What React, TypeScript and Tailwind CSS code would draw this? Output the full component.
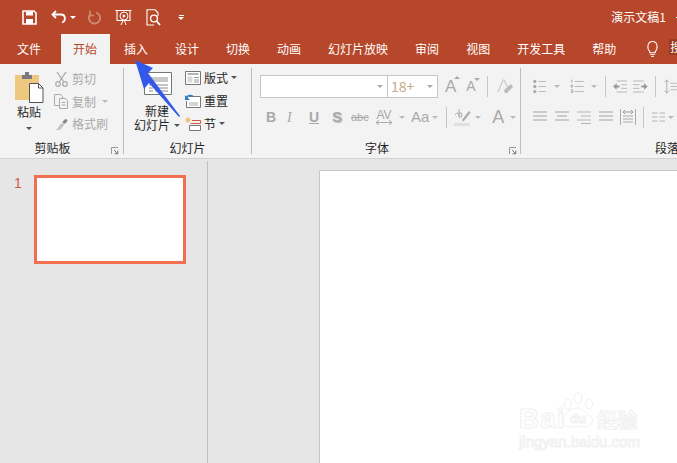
import React from 'react';

const FONT = "font-['Microsoft_YaHei','Noto_Sans_CJK_SC','Noto_Sans',sans-serif]";

const Caret = ({ className = 'border-t-[#666]' }: { className?: string }) => (
  <span className={`inline-block w-0 h-0 border-x-[3px] border-x-transparent border-t-[3px] ${className}`} />
);

const Sep = () => <div className="w-[1px] h-[86px] mt-[4px] bg-[#bdbdbd] shrink-0" />;
const MiniSep = ({ className = '' }: { className?: string }) => <div className={`w-[1px] h-[21px] bg-[#c6c6c6] shrink-0 ${className}`} />;

const Launcher = ({ className = '' }: { className?: string }) => (
  <svg width="8" height="8" viewBox="0 0 8 8" className={className}>
    <path d="M0.5 7V0.5H7" fill="none" stroke="#999" />
    <path d="M3 3l3.5 3.5M6.8 3.5v3.3H3.5" fill="none" stroke="#777" />
  </svg>
);

const tabs = [
  { label: '文件', cls: 'pl-[17px] pr-[18px]' },
  { label: '开始', cls: 'pl-3 pr-[13px] bg-[#f3f3f3] text-[#b7472a]' },
  { label: '插入', cls: 'pl-3 pr-[13px]' },
  { label: '设计', cls: 'pl-3 pr-[13px]' },
  { label: '切换', cls: 'pl-3 pr-[13px]' },
  { label: '动画', cls: 'pl-3 pr-[13px]' },
  { label: '幻灯片放映', cls: 'pl-3 pr-[13px]' },
  { label: '审阅', cls: 'pl-3 pr-[13px]' },
  { label: '视图', cls: 'pl-3 pr-[13px]' },
  { label: '开发工具', cls: 'pl-3 pr-[13px]' },
  { label: '帮助', cls: 'pl-3 pr-[13px]' },
];

const QuickBar = () => (
  <div className="h-[34px] flex items-center text-white shrink-0">
    <svg width="15" height="15" viewBox="0 0 15 15" className="ml-[22px]">
      <path d="M1 1h11l2 2v11H1z" fill="none" stroke="#fff" strokeWidth="1.6" />
      <path d="M4 1.5h7v4H4z" fill="#fff" />
      <path d="M4 9h7v5H4z" fill="#fff" />
    </svg>
    <svg width="16" height="14" viewBox="0 0 16 14" className="ml-[14px]">
      <path d="M5 1L1.5 4.5 5 8" fill="none" stroke="#fff" strokeWidth="1.8" />
      <path d="M2 4.5h8c5 0 5 7 1 8" fill="none" stroke="#fff" strokeWidth="1.8" />
    </svg>
    <Caret className="ml-[3px] border-t-white" />
    <svg width="15" height="15" viewBox="0 0 15 15" className="ml-[11px]">
      <path d="M9 2.5a5.6 5.6 0 1 1-5.5 1.5" fill="none" stroke="#d08a76" strokeWidth="1.8" />
      <path d="M3 0.5v5h4" fill="none" stroke="#d08a76" strokeWidth="1.6" />
    </svg>
    <svg width="17" height="17" viewBox="0 0 17 17" className="ml-[13px]">
      <path d="M0.5 1.5h16M2 2v9.5h13V2" fill="none" stroke="#fff" strokeWidth="1.1" />
      <circle cx="9" cy="7" r="4" fill="#b7472a" stroke="#fff" />
      <path d="M7.8 5l3 2-3 2z" fill="#fff" />
      <path d="M6 16l2-4.5M11 16l-1.5-4.5" stroke="#fff" />
    </svg>
    <svg width="15" height="17" viewBox="0 0 15 17" className="ml-[14px]">
      <path d="M8 16H1V0.8h8l3 3V7" fill="none" stroke="#fff" strokeWidth="1.1" />
      <circle cx="8" cy="9.5" r="3.4" fill="none" stroke="#fff" strokeWidth="1.4" />
      <path d="M10.5 12l3.5 4" stroke="#fff" strokeWidth="1.8" />
    </svg>
    <div className="ml-[17px] flex flex-col items-center gap-[1px]">
      <span className="w-[5px] h-[1px] bg-white" />
      <Caret className="border-t-white" />
    </div>
    <span className="ml-auto text-[12px] leading-none">演示文稿1</span>
    <span className="ml-[10px] w-[1px] h-[1px] bg-white" />
  </div>
);

const TabBar = () => (
  <div className="h-[30px] flex items-stretch gap-[2px] text-white text-[12px] shrink-0 relative">
    {tabs.map(t => (
      <div key={t.label} className={`flex items-center whitespace-nowrap ${t.cls}`}>{t.label}</div>
    ))}
    <svg width="13" height="18" viewBox="0 0 14 18" className="ml-[15px] mt-[6px]">
      <path d="M4 11.5C1 9 1 1 7 1s6 8 3 10.5V13H4z" fill="none" stroke="#fff" strokeWidth="1.1" />
      <path d="M4.5 15h5M5.5 17h3" stroke="#fff" />
    </svg>
    <div className="ml-[8px] mt-[5px] h-[16px] flex-1 bg-[#9c3a22] overflow-hidden leading-[16px] pl-[1px]">搜</div>
  </div>
);

const SmallRow = ({ icon, label, caret }: { icon: React.ReactNode; label: string; caret?: boolean }) => (
  <div className="h-[22.5px] flex items-center text-[#a9a9a9] text-[12px]">
    <span className="w-[14px] h-[15px] flex items-center justify-center">{icon}</span>
    <span className="ml-[4px]">{label}</span>
    {caret && <Caret className="ml-[6px] border-t-[#bbb]" />}
  </div>
);

const Clipboard = () => (
  <div className="w-[123px] shrink-0 flex flex-col">
    <div className="h-[76px] flex">
      <div className="w-[58px] flex flex-col items-center pt-[8px]">
        <svg width="29" height="31" viewBox="0 0 29 31" className="ml-[1px]">
          <path d="M0 3h24v25H0z" fill="#edc87e" />
          <path d="M7 3h10v4H7z" fill="#7a7a7a" />
          <path d="M10 0h4v3h-4z" fill="#7a7a7a" />
          <path d="M14.5 11.5h9l4.5 4.5v14.5H14.5z" fill="#fff" stroke="#555" />
          <path d="M23.5 11.5V16H28" fill="none" stroke="#555" />
        </svg>
        <span className="text-[12px] leading-[14px] mt-[2px] text-[#262626]">粘贴</span>
        <Caret className="mt-[8px] border-t-[#555]" />
      </div>
      <div className="flex flex-col pt-[4px] -ml-[4px]">
        <SmallRow
          label="剪切"
          icon={
            <svg width="13" height="15" viewBox="0 0 13 15">
              <path d="M2 0l6.5 9.5M11 0L4.500 9.500" stroke="#aaa" strokeWidth="1.3" />
              <circle cx="3" cy="12" r="2.300" fill="none" stroke="#aaa" strokeWidth="1.200" />
              <circle cx="10" cy="12" r="2.300" fill="none" stroke="#aaa" strokeWidth="1.200" />
            </svg>
          }
        />
        <SmallRow
          label="复制"
          caret
          icon={
            <svg width="14" height="15" viewBox="0 0 14 15">
              <path d="M0.500 0.500h6l2 2v9h-8z" fill="#f3f3f3" stroke="#aaa" />
              <path d="M5.500 4.500h6l2 2v8h-8z" fill="#f3f3f3" stroke="#aaa" />
              <path d="M7.500 8.500h4M7.500 11h4" stroke="#aaa" />
            </svg>
          }
        />
        <SmallRow
          label="格式刷"
          icon={
            <svg width="15" height="13" viewBox="0 0 15 13">
              <path d="M9 4l2-2.500 2-1 1.500 1.500-1 2-2.500 2z" fill="#888" />
              <path d="M9 4.500l2 2-3 4.500-2 1.500H1.500c2-1 3-2 3.500-4z" fill="#c4c4c4" />
            </svg>
          }
        />
      </div>
    </div>
    <div className="flex-1 flex items-center justify-center relative text-[12px] text-[#262626]">
      <span className="-mt-[2px] mr-[18px]">剪贴板</span>
      <Launcher className="absolute right-[4px] bottom-[3px]" />
    </div>
  </div>
);

const Slides = () => (
  <div className="w-[127px] shrink-0 flex flex-col">
    <div className="h-[76px] flex">
      <div className="w-[59px] flex flex-col items-center pt-[8px]">
        <svg width="30" height="24" viewBox="0 0 30 24" className="ml-[8px]">
          <path d="M1.500 0.500h27v22h-27z" fill="#fff" stroke="#777" />
          <path d="M6 5h19v5H6z" fill="#c9c9c9" />
          <path d="M6 13h4M12 13h13M6 16h4M12 16h13M6 19h4M12 19h13" stroke="#8a8a8a" />
          <path d="M0 0l4 4" stroke="#edc87e" strokeWidth="2" />
        </svg>
        <span className="text-[12px] leading-[14px] mt-[8px] ml-[7px] text-[#262626]">新建</span>
        <span className="text-[12px] leading-[14px] flex items-center whitespace-nowrap ml-[7px] text-[#262626]">
          幻灯片<Caret className="ml-[4px] border-t-[#555]" />
        </span>
      </div>
      <div className="flex flex-col pt-[2px] ml-[2px] text-[12px] text-[#262626]">
        <div className="h-[23px] flex items-center">
          <svg width="16" height="14" viewBox="0 0 16 14">
            <path d="M0.500 0.500h15v13h-15z" fill="#fff" stroke="#777" />
            <path d="M2.500 3h11" stroke="#999" strokeWidth="1.500" />
            <path d="M2.500 5.500h5v6h-5z" fill="#d9d9d9" />
            <path d="M9 6.500h5M9 9h5M9 11h5" stroke="#999" />
          </svg>
          <span className="ml-[3px]">版式</span>
          <Caret className="ml-[3px] border-t-[#555]" />
        </div>
        <div className="h-[23px] flex items-center">
          <svg width="16" height="14" viewBox="0 0 16 14">
            <path d="M4 2.500h11.500v11H1.500V7" fill="#fff" stroke="#777" />
            <path d="M4 9h9M4 11h9" stroke="#aaa" />
            <path d="M1 4.500c1-3 5-4 7-2" fill="none" stroke="#2f7ec4" strokeWidth="1.600" />
            <path d="M0 1v5h5z" fill="#2f7ec4" />
          </svg>
          <span className="ml-[3px]">重置</span>
        </div>
        <div className="h-[23px] flex items-center">
          <svg width="16" height="14" viewBox="0 0 16 14">
            <path d="M3 0v6M0 3h6M1 1l4 4M5 1L1 5" stroke="#edb95e" />
            <path d="M7 3.500h8.500v3H5.500" fill="none" stroke="#d2593e" />
            <path d="M4.500 8.500h11v5h-11z" fill="#fff" stroke="#777" />
          </svg>
          <span className="ml-[3px]">节</span>
          <Caret className="ml-[3px] border-t-[#555]" />
        </div>
      </div>
    </div>
    <div className="flex-1 flex items-center justify-center text-[12px] text-[#262626]">
      <span className="-mt-[2px]">幻灯片</span>
    </div>
  </div>
);

const FontGroup = () => (
  <div className="w-[268px] shrink-0 flex flex-col relative">
    <div className="h-[76px] flex flex-col pl-[8px]">
      <div className="h-[23px] mt-[11px] flex items-center">
        <div className="w-[128px] h-[23px] bg-white border border-[#c6c6c6] flex items-center justify-end pr-[4px]">
          <Caret className="border-t-[#aaa]" />
        </div>
        <div className="w-[50px] h-[23px] bg-white border border-[#c6c6c6] border-l-0 flex items-center justify-between pl-[3px] pr-[4px] text-[14px] text-[#c4ab8a]">
          18+
          <Caret className="border-t-[#aaa]" />
        </div>
        <span className="ml-[7px] text-[17px] text-[#a9a9a9] font-['Liberation_Sans',sans-serif] relative">
          A
          <span className="absolute -right-[4px] top-[2px] w-0 h-0 border-x-[3px] border-x-transparent border-b-[3px] border-b-[#a9a9a9]" />
        </span>
        <span className="ml-[10px] text-[14px] text-[#a9a9a9] font-['Liberation_Sans',sans-serif] relative">
          A
          <span className="absolute -right-[4px] top-[2px] w-0 h-0 border-x-[3px] border-x-transparent border-t-[3px] border-t-[#a9a9a9]" />
        </span>
        <MiniSep className="ml-[11px]" />
        <svg width="17" height="17" viewBox="0 0 17 17" className="ml-[9px]">
          <path d="M7 12l7-6 2 3-6 6H8z" fill="#bbb" />
          <path d="M1 14l5-12h1l4 8" fill="none" stroke="#c8c8c8" strokeWidth="1.200" />
        </svg>
      </div>
      <div className="h-[26px] mt-[6px] flex items-center text-[#a9a9a9] font-['Liberation_Sans',sans-serif] relative">
        <span className="ml-[6px] w-[21px] text-[14px] font-bold">B</span>
        <span className="w-[22px] text-[14px] italic font-['Liberation_Serif',serif]">I</span>
        <span className="w-[23px] text-[14px] font-bold underline">U</span>
        <span className="w-[19px] text-[15px] font-bold [text-shadow:1px_1px_1px_#bbb]">S</span>
        <span className="w-[22px] text-[11px] line-through">abc</span>
        <span className="w-[22px] flex flex-col items-center text-[12px] leading-[10px]">
          AV
          <svg width="16" height="5" viewBox="0 0 16 5">
            <path d="M0 2.500h16M3 0L0 2.500 3 5M13 0l3 2.500L13 5" fill="none" stroke="#aaa" />
          </svg>
        </span>
        <Caret className="ml-[4px] border-t-[#bbb]" />
        <span className="ml-[6px] text-[15px]">Aa</span>
        <Caret className="ml-[3px] border-t-[#bbb]" />
        <MiniSep className="ml-[8px]" />
        <svg width="17" height="19" viewBox="0 0 17 19" className="ml-[7px]">
          <path d="M0 15h16v3H0z" fill="#e3dde3" />
          <path d="M8 12l7-9 1.500 1.500-7 9z" fill="#aaa" />
          <path d="M1 7q3-4 4 0v2M5 1v8q3 1 3-2t-3-2" fill="none" stroke="#aaa" />
        </svg>
        <Caret className="ml-[4px] border-t-[#bbb]" />
        <span className="ml-[11px] text-[18px]">A</span>
        <Caret className="ml-[6px] border-t-[#bbb]" />
      </div>
    </div>
    <div className="flex-1 flex items-center justify-center text-[12px] text-[#262626]">
      <span className="-mt-[2px] mr-[18px]">字体</span>
    </div>
    <Launcher className="absolute right-[3px] bottom-[3px]" />
  </div>
);

const Lines = ({ rows, w, offs = [] }: { rows: number; w: number; offs?: number[] }) => (
  <svg width={w} height={rows * 4 + 1} viewBox={`0 0 ${w} ${rows * 4 + 1}`}>
    {Array.from({ length: rows }).map((_, i) => (
      <path key={i} d={`M${offs[i] ?? 0} ${i * 4 + 1}H${w - (offs[i] ?? 0)}`} stroke="#b5b5b5" strokeWidth="1.300" />
    ))}
  </svg>
);

const ParaGroup = () => (
  <div className="flex-1 flex flex-col min-w-0 overflow-hidden">
    <div className="h-[76px] flex flex-col pl-[12px]">
      <div className="h-[23px] mt-[11px] flex items-center">
        <svg width="14" height="15" viewBox="0 0 14 15">
          <circle cx="2" cy="2" r="1.800" fill="#aaa" /><circle cx="2" cy="7.500" r="1.800" fill="#aaa" /><circle cx="2" cy="13" r="1.800" fill="#aaa" />
          <path d="M6 2h8M6 7.500h8M6 13h8" stroke="#b5b5b5" />
        </svg>
        <Caret className="ml-[8px] border-t-[#bbb]" />
        <svg width="15" height="15" viewBox="0 0 15 15" className="ml-[10px]">
          <path d="M1 0.500h1v3M1 6h2v1H1v1h2M1 11h2v3H1M1 12.500h2" fill="none" stroke="#aaa" />
          <path d="M5 2h10M5 7.500h10M5 13h10" stroke="#b5b5b5" />
        </svg>
        <Caret className="ml-[7px] border-t-[#bbb]" />
        <MiniSep className="ml-[8px]" />
        <svg width="16" height="13" viewBox="0 0 16 13" className="ml-[7px]">
          <path d="M4 0.500h12M9 4.500h7M9 8.500h7M4 12.500h12" stroke="#b5b5b5" />
          <path d="M0 6.500l4-3.500v2.500h3v2H4V10z" fill="#999" />
        </svg>
        <svg width="16" height="13" viewBox="0 0 16 13" className="ml-[6px]">
          <path d="M0 0.500h12M0 4.500h7M0 8.500h7M0 12.500h12" stroke="#b5b5b5" />
          <path d="M16 6.500L12 3v2.500H9v2h3V10z" fill="#999" />
        </svg>
        <MiniSep className="ml-[7px]" />
        <svg width="14" height="15" viewBox="0 0 14 15" className="ml-[8px]">
          <path d="M3 0v15M0.500 3L3 0.500 5.500 3M0.500 12L3 14.500 5.500 12" fill="none" stroke="#aaa" />
          <path d="M7 4h7M7 7.500h7M7 11h7" stroke="#b5b5b5" />
        </svg>
      </div>
      <div className="h-[26px] mt-[6px] flex items-center">
        <Lines rows={3} w={14} />
        <span className="ml-[8px]"><Lines rows={3} w={14} offs={[0, 2, 0]} /></span>
        <svg width="14" height="13" viewBox="0 0 14 13" className="ml-[8px]">
          <path d="M0 1h14M4 5h10M0 9h14M4 12.500h10" stroke="#b5b5b5" />
        </svg>
        <span className="ml-[8px]"><Lines rows={3} w={14} /></span>
        <svg width="16" height="16" viewBox="0 0 16 16" className="ml-[7px]">
          <path d="M0.500 0v16M15.500 0v16M3 7h10M3 10h10M3 13h10" stroke="#aaa" />
          <path d="M3 3h10M5 1L3 3l2 2M11 1l2 2-2 2" fill="none" stroke="#999" />
        </svg>
        <MiniSep className="ml-[7px]" />
        <svg width="13" height="10" viewBox="0 0 13 10" className="ml-[8px]">
          <path d="M0 1h5.500M7.500 1H13M0 5h5.500M7.500 5H13M0 9h5.500M7.500 9H13" stroke="#b5b5b5" />
        </svg>
        <Caret className="ml-[3px] border-t-[#bbb]" />
      </div>
    </div>
    <div className="flex-1 flex items-center text-[12px] text-[#262626] pl-[134px]">
      <span className="-mt-[2px] whitespace-nowrap">段落</span>
    </div>
  </div>
);

const Watermark = () => (
  <div className="absolute left-[519px] top-[390px] w-[125px] text-white pointer-events-none">
    <div className="flex items-end h-[44px]">
      <span className="text-[28px] leading-[30px] tracking-[1px] font-bold font-['Liberation_Sans',sans-serif] [-webkit-text-stroke:1px_#f0f0f0]">Bai</span>
      <svg width="37" height="42" viewBox="0 0 37 42" className="-ml-[6px]">
        <ellipse cx="8" cy="12" rx="3.500" ry="5" fill="#fff" stroke="#f0f0f0" />
        <ellipse cx="18" cy="6" rx="4" ry="5.500" fill="#fff" stroke="#f0f0f0" />
        <ellipse cx="29" cy="12" rx="3.500" ry="5" fill="#fff" stroke="#f0f0f0" />
        <path d="M18 16c5 0 7 5 12 8s2 12-5 11-10-1-14 0-11-3-7-10 8-9 14-9z" fill="#fff" stroke="#f0f0f0" />
        <text x="18" y="31" textAnchor="middle" fontSize="13" fontFamily="Liberation Sans" fontWeight="700" fill="#fff" stroke="#f0f0f0">du</text>
      </svg>
      <span className="ml-[1px] text-[20px] leading-[28px] font-bold [-webkit-text-stroke:1px_#f0f0f0] whitespace-nowrap">经验</span>
    </div>
    <div className="text-[15px] leading-[16px] mt-[0px] font-['Liberation_Sans',sans-serif] [-webkit-text-stroke:1px_#f1f1f1] whitespace-nowrap">jingyan.baidu.com</div>
  </div>
);

export default function App() {
  return (
    <div className={`w-[677px] h-[463px] overflow-hidden relative flex flex-col bg-[#e6e6e6] ${FONT}`}>
      <div className="bg-[#b7472a] shrink-0">
        <QuickBar />
        <TabBar />
      </div>
      <div className="h-[95px] bg-[#f3f3f3] border-b-[1px] border-[#d2d2d2] flex shrink-0">
        <Clipboard />
        <Sep />
        <Slides />
        <Sep />
        <FontGroup />
        <Sep />
        <ParaGroup />
      </div>
      <div className="flex-1 flex min-h-0">
        <div className="w-[208px] shrink-0 mt-[2px] border-r border-[#bfbfbf] flex items-start pt-[14px]">
          <span className="w-[14px] ml-[14px] mr-[6px] text-[14px] leading-[16px] text-[#d2593e] font-['Liberation_Sans',sans-serif]">1</span>
          <div className="w-[152px] h-[89px] bg-white border-[3px] border-[#f2704f]" />
        </div>
        <div className="flex-1 pl-[111px] pt-[11px] min-w-0">
          <div className="h-full bg-white border-l border-t border-[#c6c6c6]" />
        </div>
      </div>
      <svg width="60" height="70" viewBox="0 0 60 70" className="absolute left-[128px] top-[56px] pointer-events-none">
        <path d="M7 4L25 12 20 17 52 60 51 61 21 27 16 33z" fill="#3358ea" />
      </svg>
      <Watermark />
    </div>
  );
}
